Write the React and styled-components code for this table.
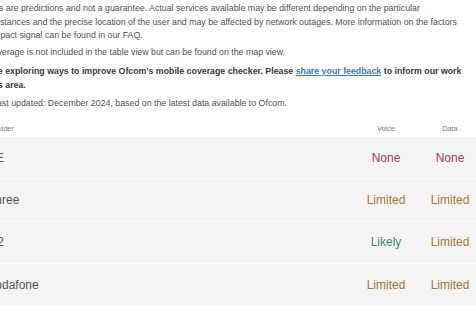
import React from "react";
import styled, { createGlobalStyle } from "styled-components";

const Global = createGlobalStyle`
  html, body { margin: 0; padding: 0; overflow: hidden; background: #fff; }
  body { font-family: "Liberation Sans", Arial, sans-serif; }
`;

const Page = styled.div`
  width: 508px;
  margin-left: -26px;
  padding-top: 2px;
  color: #555;
`;

const Notes = styled.div`
  max-width: 495px;
`;

const Para = styled.p`
  margin: ${(p) => p.$top || 0}px 0 0 0;
  font-size: 8.8px;
  line-height: 13.5px;
  font-weight: ${(p) => (p.$bold ? 700 : 400)};
  color: ${(p) => (p.$bold ? "#3a3a3a" : "#505050")};
`;

const Link = styled.a`
  color: #3f7aa6;
  text-decoration: underline;
`;

const Table = styled.div`
  margin-top: 4.25px;
`;

const HeaderRow = styled.div`
  display: grid;
  grid-template-columns: 1fr 64px 64px;
  height: 22px;
  padding-top: 4px;
  box-sizing: border-box;
  align-items: center;
  font-size: 7.2px;
  color: #777;
`;

const HeadCell = styled.div`
  padding-left: ${(p) => (p.$first ? "13px" : "0")};
  text-align: ${(p) => (p.$first ? "left" : "center")};
`;

const Row = styled.div`
  display: grid;
  grid-template-columns: 1fr 64px 64px;
  align-items: center;
  height: 41.3px;
  background: #f4f4f4;
  border-bottom: 1px solid #fbfbfb;
  font-size: 12px;
`;

const Name = styled.div`
  padding-left: 14px;
  color: #555;
`;

const statusColors = {
  None: "#a8386a",
  Limited: "#a87838",
  Likely: "#3f8a64",
};

const Status = styled.div`
  text-align: center;
  color: ${(p) => statusColors[p.$v]};
`;

const rows = [
  ["EE", "None", "None"],
  ["Three", "Limited", "Limited"],
  ["O2", "Likely", "Limited"],
  ["Vodafone", "Limited", "Limited"],
];

export default function App() {
  return (
    <>
      <Global />
      <Page>
        <Notes>
          <Para>
            Results are predictions and not a guarantee. Actual services available may be
            different depending on the particular circumstances and the precise location of the
            user and may be affected by network outages. More information on the factors{" "}
            that impact signal can be found in our FAQ.
          </Para>
          <Para $top={3.25}>
            5G coverage is not included in the table view but can be found on the map view.
          </Para>
          <Para $top={5.75} $bold>
            We are exploring ways to improve Ofcom's mobile coverage checker. Please{" "}
            <Link href="#">share your feedback</Link> to inform our work on this area.
          </Para>
          <Para $top={5.25}>
            Data last updated: December 2024, based on the latest data available to Ofcom.
          </Para>
        </Notes>
        <Table>
          <HeaderRow>
            <HeadCell $first>Provider</HeadCell>
            <HeadCell>Voice</HeadCell>
            <HeadCell>Data</HeadCell>
          </HeaderRow>
          {rows.map(([name, voice, data]) => (
            <Row key={name}>
              <Name>{name}</Name>
              <Status $v={voice}>{voice}</Status>
              <Status $v={data}>{data}</Status>
            </Row>
          ))}
        </Table>
      </Page>
    </>
  );
}
